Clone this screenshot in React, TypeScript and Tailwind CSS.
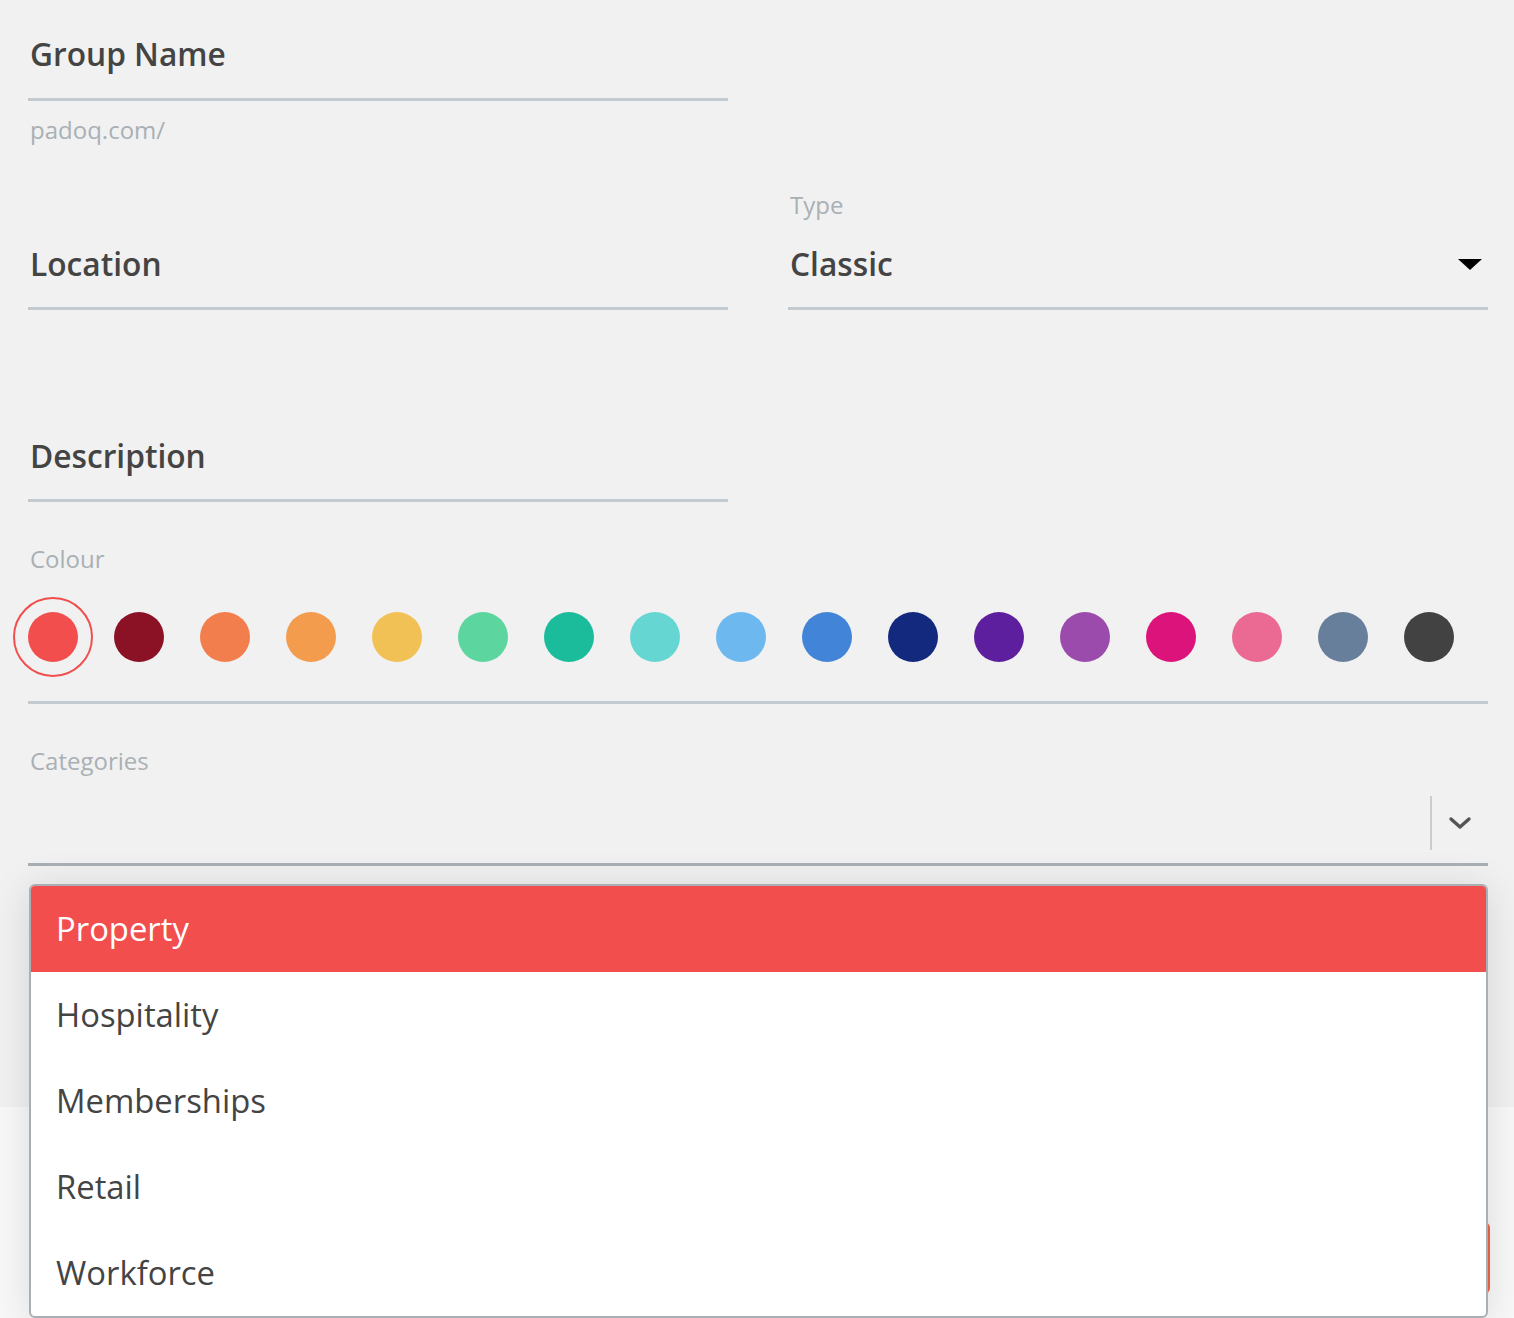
import React from "react";

const colours = [
  "#f24e4e",
  "#8b1124",
  "#f37e4d",
  "#f39c4e",
  "#f2c155",
  "#5cd69e",
  "#1abc9c",
  "#65d6d2",
  "#6cb8ef",
  "#4285d8",
  "#13297e",
  "#5e1f9f",
  "#9b4bab",
  "#dc137b",
  "#eb6a93",
  "#687f9c",
  "#424242",
];

const categories = ["Property", "Hospitality", "Memberships", "Retail", "Workforce"];

export default function App() {
  const selected = 0;
  const active = "Property";

  return (
    <div className="relative h-[1318px] overflow-hidden bg-[#f1f1f1] font-['Open_Sans',sans-serif] text-[#444]">
      <div className="pl-[28px] pr-[26px]">
        {/* group name */}
        <div className="w-[700px] border-b-[3px] border-[#c3cbd0] pt-[34px] pb-[24px]">
          <div className="pl-[2px] text-[31.7px] font-semibold leading-[40px]">Group Name</div>
        </div>
        <div className="mt-[14px] pl-[2px] text-[24px] leading-[30px] text-[#a9b0b5]">padoq.com/</div>

        {/* location + type */}
        <div className="mt-[45px] grid grid-cols-[700px_700px] items-end gap-x-[60px]">
          <div className="border-b-[3px] border-[#c3cbd0] pb-[23px]">
            <div className="pl-[2px] text-[31.7px] font-semibold leading-[40px]">Location</div>
          </div>
          <div className="border-b-[3px] border-[#c3cbd0] pb-[23px]">
            <div className="pl-[2px] text-[24px] leading-[30px] text-[#a9b0b5]">Type</div>
            <div className="mt-[24px] flex items-center justify-between pl-[2px] pr-[6px]">
              <span className="text-[31.7px] font-semibold leading-[40px]">Classic</span>
              <svg width="24" height="11" viewBox="0 0 24 11">
                <path d="M0 0 L24 0 L12 11 Z" fill="#000" />
              </svg>
            </div>
          </div>
        </div>

        {/* description */}
        <div className="mt-[126px] w-[700px] border-b-[3px] border-[#c3cbd0] pb-[23px]">
          <div className="pl-[2px] text-[31.7px] font-semibold leading-[40px]">Description</div>
        </div>

        {/* colour */}
        <div className="mt-[42px] pl-[2px] text-[24px] leading-[30px] text-[#a9b0b5]">Colour</div>
        <div className="mt-[23px] border-b-[3px] border-[#c3cbd0] pb-[24px]">
          <div className="-ml-[15px] flex gap-[6px]">
            {colours.map((c, i) => (
              <button
                key={c}
                className={
                  "flex h-[80px] w-[80px] items-center justify-center rounded-full " +
                  (i === selected ? "border-2 border-[#f24e4e]" : "border-2 border-transparent")
                }
              >
                <span className="block h-[50px] w-[50px] rounded-full" style={{ backgroundColor: c }} />
              </button>
            ))}
          </div>
        </div>

        {/* categories */}
        <div className="mt-[42px] pl-[2px] text-[24px] leading-[30px] text-[#a9b0b5]">Categories</div>
        <div className="flex h-[90px] items-center justify-end border-b-[3px] border-[#a9b0b5]">
          <div className="mt-[6px] flex h-[54px] items-center">
            <div className="h-full w-[2px] bg-[#cccccc]" />
            <div className="flex w-[56px] items-center justify-center">
              <svg width="24" height="14" viewBox="0 0 24 14">
                <path d="M3 3 L12 11 L21 3" fill="none" stroke="#555" strokeWidth="3.4" strokeLinecap="round" strokeLinejoin="round" />
              </svg>
            </div>
          </div>
        </div>
      </div>

      {/* footer behind the open menu */}
      <div className="absolute inset-x-0 top-[1107px] bottom-0 bg-[#f8f8f8]">
        <div className="absolute right-[24px] top-[115px] h-[72px] w-[200px] rounded-[6px] bg-[#ef6547]" />
      </div>

      {/* open category menu */}
      <div className="absolute left-[29px] top-[884px] w-[1459px] overflow-hidden rounded-[6px] border-2 border-[#a9b0b5] bg-white shadow-[0_4px_40px_rgba(0,0,0,0.12)]">
        {categories.map((c) => (
          <div
            key={c}
            className={
              "flex h-[86px] items-center px-[25px] text-[32.8px] leading-[40px] " +
              (c === active ? "bg-[#f24e4e] text-white" : "text-[#444]")
            }
          >
            {c}
          </div>
        ))}
      </div>
    </div>
  );
}
